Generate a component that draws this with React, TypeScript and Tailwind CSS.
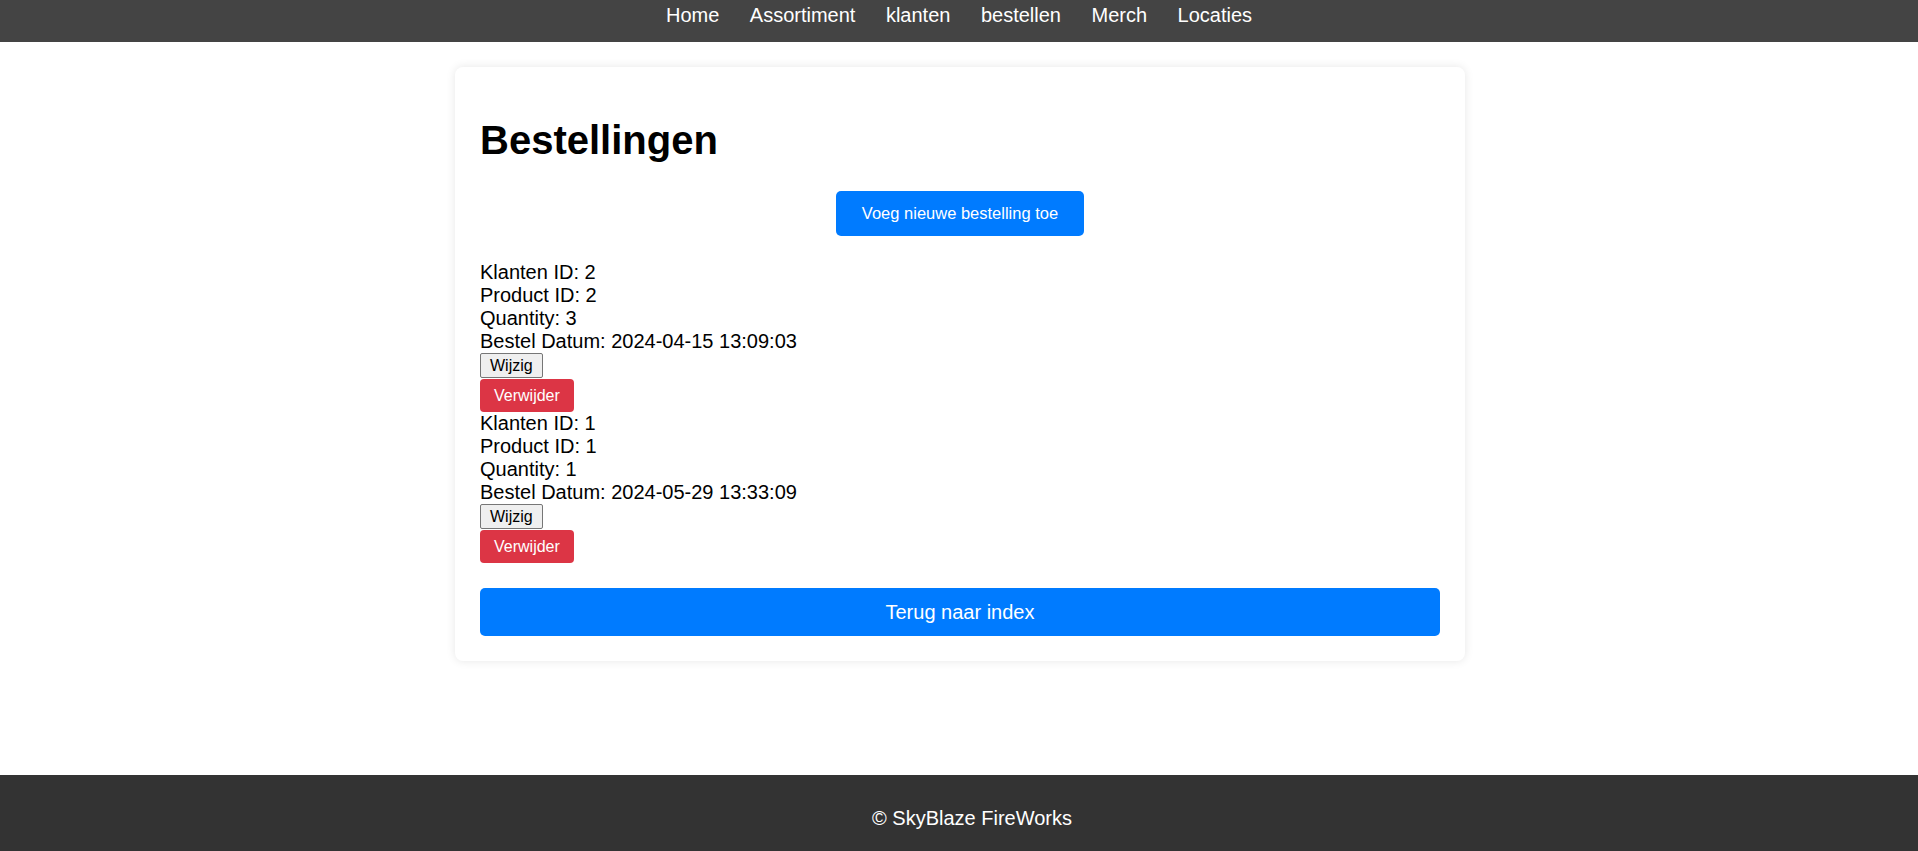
import React from 'react'

const navLinks = ['Home', 'Assortiment', 'klanten', 'bestellen', 'Merch', 'Locaties']

const orders = [
  { klant: 2, product: 2, quantity: 3, datum: '2024-04-15 13:09:03' },
  { klant: 1, product: 1, quantity: 1, datum: '2024-05-29 13:33:09' },
]

function OrderItem({ order }: { order: (typeof orders)[number] }) {
  return (
    <div className="flex flex-col items-start">
      <div className="text-[20px] leading-[23px]">Klanten ID: {order.klant}</div>
      <div className="text-[20px] leading-[23px]">Product ID: {order.product}</div>
      <div className="text-[20px] leading-[23px]">Quantity: {order.quantity}</div>
      <div className="text-[20px] leading-[23px]">Bestel Datum: {order.datum}</div>
      <button className="h-[25px] px-[9px] border border-[#767676] bg-[#efefef] rounded-[2px] text-[16px] leading-[18px] text-black">
        Wijzig
      </button>
      <button className="mt-[1px] h-[33px] px-[14px] bg-[#dc3545] rounded-[4px] text-[16px] leading-[18px] text-white">
        Verwijder
      </button>
    </div>
  )
}

export default function App() {
  return (
    <div className="min-h-screen flex flex-col bg-white text-black font-['Liberation_Sans',Arial,sans-serif]">
      {/* Top navigation */}
      <nav className="h-[42px] bg-[#444444] flex justify-center gap-[30.5px] pt-[4px]">
        {navLinks.map((l) => (
          <a key={l} href="#" className="text-white text-[20px] leading-[23px]">
            {l}
          </a>
        ))}
      </nav>

      <main className="flex-1 flex justify-center items-start pt-[25px] pl-[2px]">
        <div className="w-[1010px] bg-white rounded-[8px] shadow-[0_0_10px_rgba(0,0,0,0.1)] px-[25px] pt-[25px] pb-[25px]">
          <h1 className="mt-[25px] text-[40px] leading-[46px] font-bold">Bestellingen</h1>

          <div className="mt-[28px] flex justify-center">
            <button className="h-[45px] px-[26px] bg-[#007bff] rounded-[5px] text-white text-[16.5px] leading-[19px]">
              Voeg nieuwe bestelling toe
            </button>
          </div>

          <div className="mt-[25px] flex flex-col">
            {orders.map((o, i) => (
              <OrderItem key={i} order={o} />
            ))}
          </div>

          <button className="mt-[25px] w-full h-[48px] bg-[#007bff] rounded-[5px] text-white text-[20px] leading-[23px]">
            Terug naar index
          </button>
        </div>
      </main>

      {/* Footer */}
      <footer className="h-[76px] bg-[#333333] pt-[32px] pl-[26px] text-center text-white text-[20px] leading-[23px]">
        © SkyBlaze FireWorks
      </footer>
    </div>
  )
}
